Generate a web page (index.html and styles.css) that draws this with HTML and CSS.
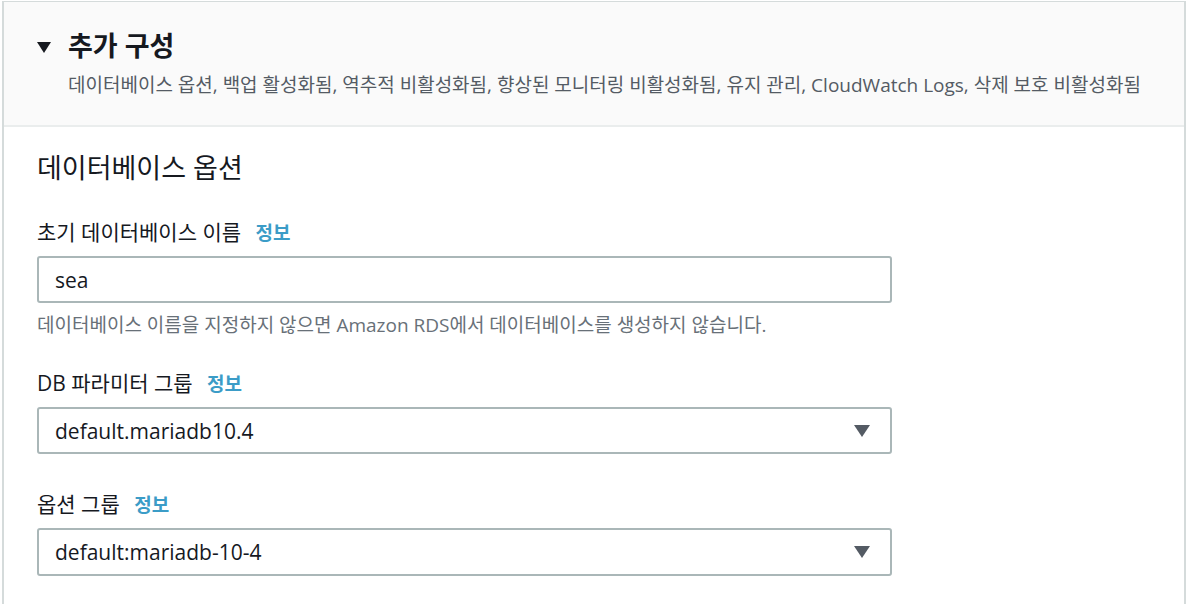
FILE: index.html
```html
<!DOCTYPE html>
<html lang="ko">
<head>
<meta charset="utf-8">
<link rel="stylesheet" href="styles.css">
</head>
<body>
<div class="card">
  <div class="head">
    <div class="title-row">
      <span class="caret"></span>
      <h2 class="title">추가 구성</h2>
    </div>
    <div class="desc">데이터베이스 옵션, 백업 활성화됨, 역추적 비활성화됨, 향상된 모니터링 비활성화됨, 유지 관리, CloudWatch Logs, 삭제 보호 비활성화됨</div>
  </div>
  <div class="body">
    <h3 class="section">데이터베이스 옵션</h3>
    <div class="field">
      <div class="label">초기 데이터베이스 이름 <a class="info">정보</a></div>
      <div class="input">sea</div>
      <div class="help">데이터베이스 이름을 지정하지 않으면 Amazon RDS에서 데이터베이스를 생성하지 않습니다.</div>
    </div>
    <div class="field">
      <div class="label">DB 파라미터 그룹 <a class="info">정보</a></div>
      <div class="input select"><span>default.mariadb10.4</span><span class="arrow"></span></div>
    </div>
    <div class="field">
      <div class="label">옵션 그룹 <a class="info">정보</a></div>
      <div class="input select"><span>default:mariadb-10-4</span><span class="arrow"></span></div>
    </div>
  </div>
</div>
</body>
</html>
```
FILE: styles.css
```css
html, body {
  margin: 0;
  padding: 0;
  background: #ffffff;
  overflow: hidden;
}
body {
  font-family: "Open Sans", "Noto Sans CJK KR", sans-serif;
  color: #16191f;
  padding: 1px 2px 0 2px;
}
.card {
  width: 1180px;
  height: 620px;
  border: 1px solid #d5dbdb;
  border-left: 2px solid #d5dbdb;
  border-right: 2px solid #d5dbdb;
  background: #fff;
}
.head {
  background: #fafafa;
  border-bottom: 2px solid #eaeded;
  height: 125px;
  box-sizing: border-box;
  padding: 27px 0 0 33px;
}
.title-row {
  display: flex;
  align-items: center;
  gap: 17px;
}
.caret {
  width: 0;
  height: 0;
  border-left: 7px solid transparent;
  border-right: 7px solid transparent;
  border-top: 11px solid #16191f;
  margin-top: 2px;
}
.title {
  margin: 0;
  font-size: 27px;
  font-weight: 700;
  line-height: 34px;
}
.desc {
  margin: 9px 0 0 31px;
  font-size: 19px;
  line-height: 26px;
  color: #545b64;
}
.body {
  padding: 23px 0 0 33px;
}
.section {
  margin: 0;
  font-size: 27px;
  font-weight: 400;
  line-height: 36px;
}
.field {
  margin-top: 32px;
}
.field:last-child {
  margin-top: 36px;
}
.label {
  font-size: 21px;
  line-height: 28px;
}
.info {
  color: #3b9cc7;
  font-weight: 700;
  font-size: 19px;
  margin-left: 9px;
}
.input {
  margin-top: 9px;
  width: 855px;
  height: 47px;
  box-sizing: border-box;
  border: 2px solid #aab7b8;
  border-radius: 3px;
  padding: 0 16px;
  display: flex;
  align-items: center;
  font-size: 21px;
}
.field:last-child .input {
  height: 48px;
}
.select {
  justify-content: space-between;
  padding-right: 20px;
}
.arrow {
  width: 0;
  height: 0;
  border-left: 8px solid transparent;
  border-right: 8px solid transparent;
  border-top: 12px solid #545b64;
}
.help {
  margin-top: 10px;
  font-size: 19px;
  line-height: 24px;
  color: #687078;
}
```
